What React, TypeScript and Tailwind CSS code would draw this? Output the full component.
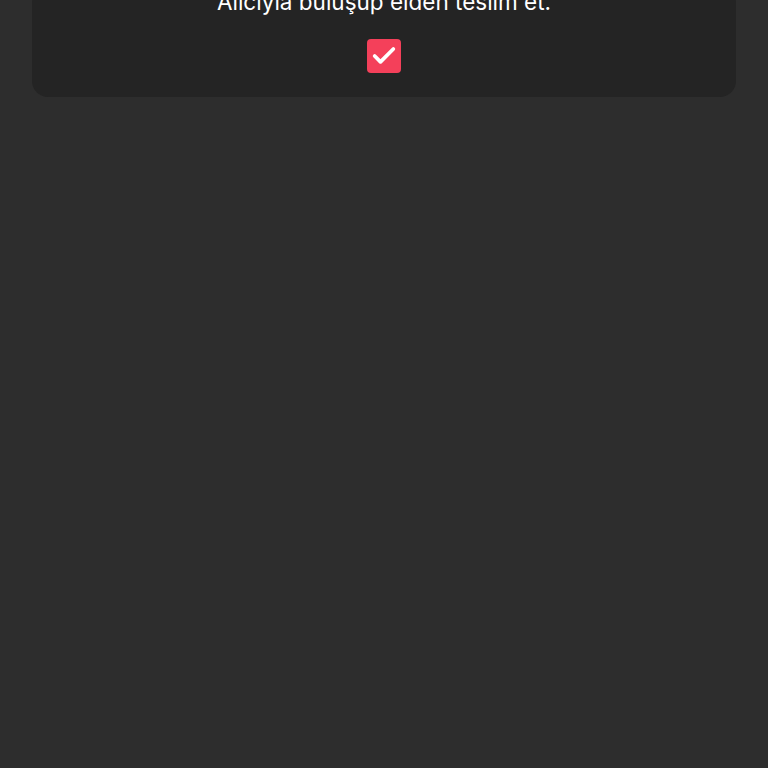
import { Check } from "lucide-react";

export default function App() {
  return (
    <div
      className="min-h-screen overflow-hidden bg-[#2d2d2d] px-8"
      style={{ fontFamily: "Inter, 'Noto Sans', sans-serif" }}
    >
      <div className="-mt-[13px] flex flex-col items-center rounded-2xl bg-[#242424] pb-6">
        <p className="text-[22.5px] leading-[30px] text-white">Alıcıyla buluşup elden teslim et.</p>
        <button className="mt-[22px] flex h-[34px] w-[34px] items-center justify-center rounded-[4px] bg-[#f4405a]">
          <Check className="h-7 w-7 text-white" strokeWidth={3.2} />
        </button>
      </div>
    </div>
  );
}
